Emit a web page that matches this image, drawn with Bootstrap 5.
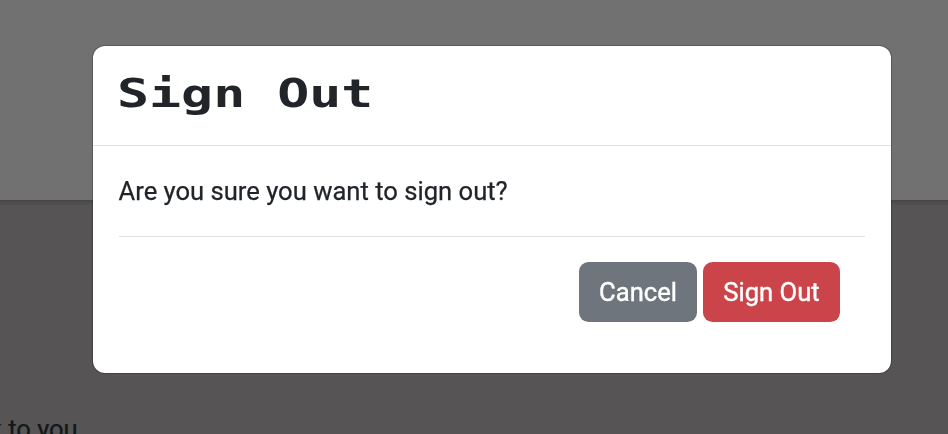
<!DOCTYPE html>
<html lang="en">
<head>
<meta charset="utf-8">
<meta name="viewport" content="width=device-width, initial-scale=1">
<title>Sign Out</title>
<link href="https://cdn.jsdelivr.net/npm/bootstrap@5.3.0/dist/css/bootstrap.min.css" rel="stylesheet">
<style>
body { font-family: Roboto, "Liberation Sans", sans-serif; font-size: 25.6px; line-height: 38px; background: #575455; color: #212529; height: 434px; }
.page-hero { height: 200px; margin: 0 -10px; background: #717171; box-shadow: 0 1px 6px rgba(0,0,0,.3); }
.page-copy { height: 234px; padding-top: 210px; color: #111817; white-space: nowrap; }
.page-copy span { margin-left: -11px; letter-spacing: -.05px; -webkit-text-stroke: .25px; }
.signout-dialog { max-width: 800px; width: 800px; margin: 45px 0 0 92px; }
.signout-dialog .modal-content { border-radius: 13px; border: 1px solid rgba(0,0,0,.22); background-clip: padding-box; height: 329px; }
.signout-dialog .modal-header { height: 100px; padding: 0 25px 4px 24px; border-bottom: 1px solid #dee2e6; border-radius: 0; }
.signout-dialog .modal-title { font-family: "DejaVu Sans Mono", monospace; font-weight: 700; font-size: 39px; line-height: 48px; transform: scaleX(1.365); transform-origin: left; white-space: pre; }
.signout-dialog .modal-body { padding: 26px 26px 0; }
.signout-dialog .message { height: 65px; border-bottom: 1px solid #dee2e6; text-indent: -.5px; -webkit-text-stroke: .25px; }
.signout-dialog .actions { gap: 6px; padding: 25px 25px 0 0; }
.signout-dialog .btn { height: 60px; padding: 0 20px; border: 0; border-radius: 9.6px; font-size: 25.6px; line-height: 60px; -webkit-text-stroke: .4px; }
.signout-dialog .btn-leave { width: 137px; padding: 0; }
.btn-leave, .btn-leave:hover { background: #cb444a; color: #fff; }
.btn-stay, .btn-stay:hover { background: #6e757c; color: #fff; }
</style>
<script src="https://cdn.jsdelivr.net/npm/bootstrap@5.3.0/dist/js/bootstrap.bundle.min.js"></script>
</head>
<body class="overflow-hidden">
<header class="page-hero"></header>
<main class="page-copy overflow-hidden"><span>k to you</span></main>
<div class="modal d-block overflow-hidden" tabindex="-1" role="dialog" aria-labelledby="signout-title">
  <div class="modal-dialog signout-dialog">
    <div class="modal-content">
      <div class="modal-header">
        <h1 class="modal-title" id="signout-title">Sign Out</h1>
      </div>
      <div class="modal-body">
        <p class="message mb-0">Are you sure you want to sign out?</p>
        <div class="actions d-flex justify-content-end">
          <button type="button" class="btn btn-stay">Cancel</button>
          <button type="button" class="btn btn-leave">Sign Out</button>
        </div>
      </div>
    </div>
  </div>
</div>
</body>
</html>
